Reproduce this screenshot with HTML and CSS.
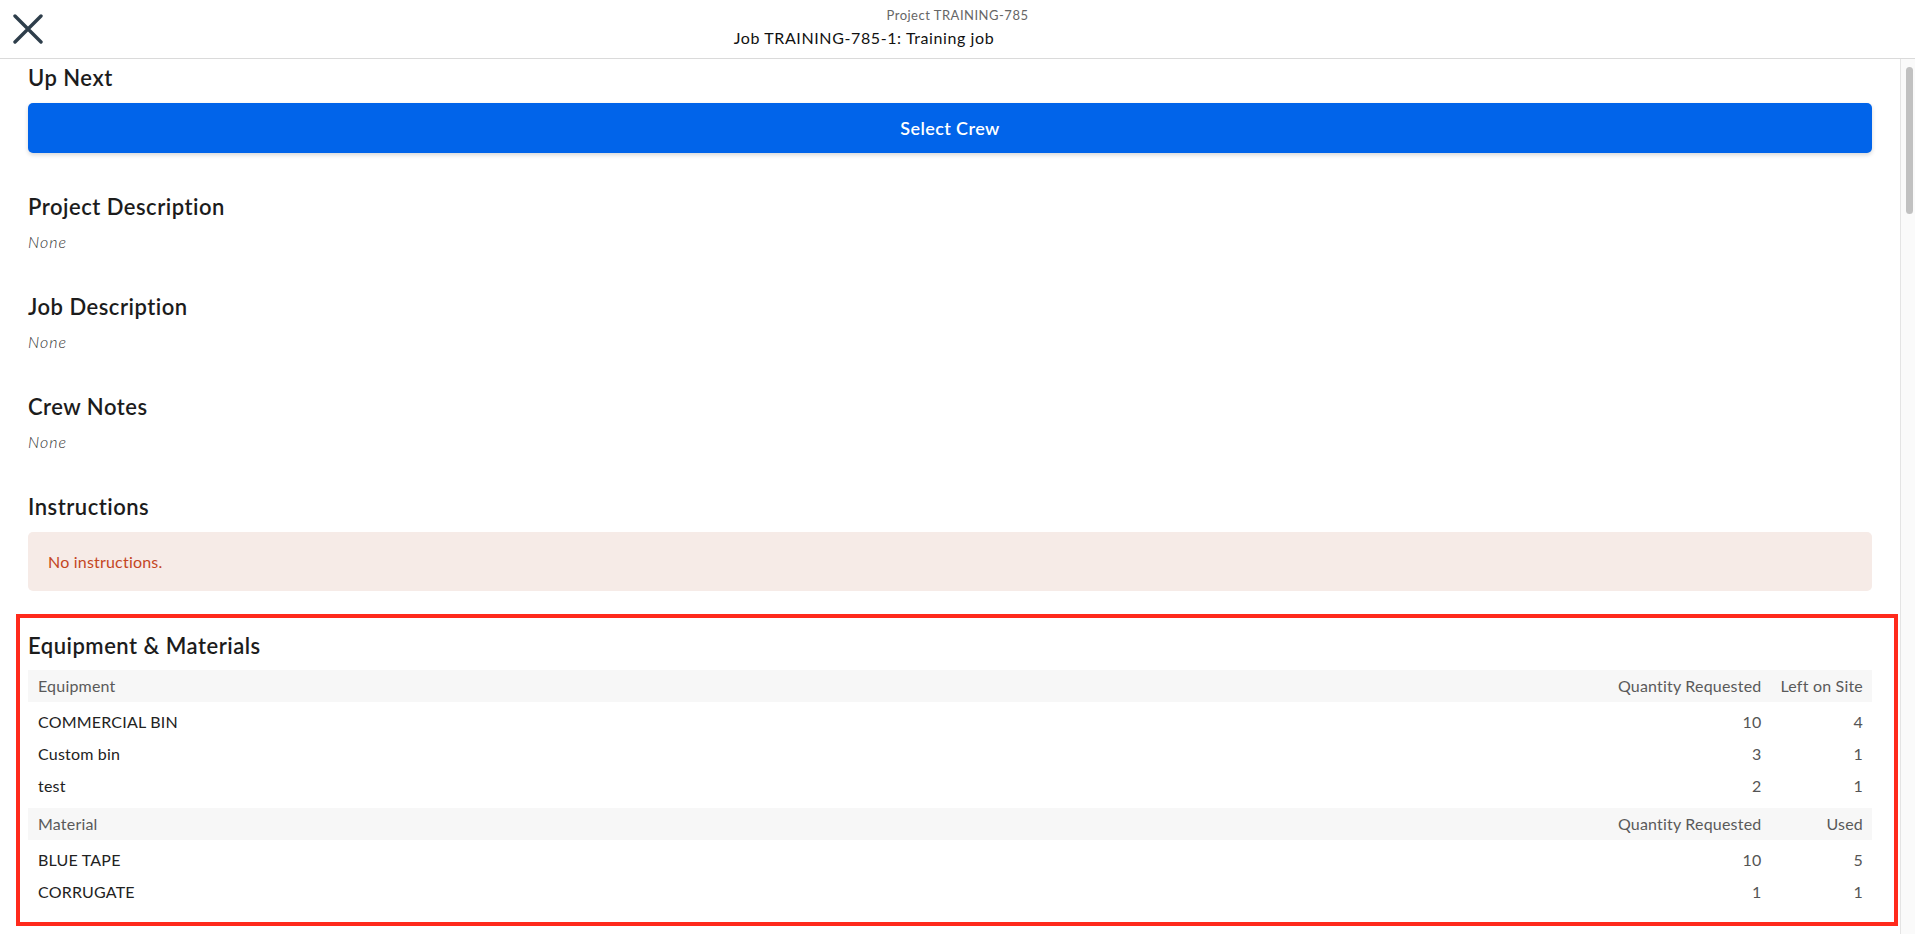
FILE: index.html
```html
<!DOCTYPE html>
<html lang="en">
<head>
    <meta charset="UTF-8">
    <meta name="viewport" content="width=device-width, initial-scale=1.0">
    <title>Job TRAINING-785-1</title>
    <link rel="stylesheet" href="styles.css">
</head>
<body>
    <header class="topbar">
        <button class="close-btn" aria-label="Close">
            <svg width="30" height="30" viewBox="0 0 30 30">
                <path d="M2 2 L28 28 M28 2 L2 28" stroke="#2e3e4b" stroke-width="3.4" stroke-linecap="round" fill="none"/>
            </svg>
        </button>
        <div class="titles">
            <div class="project-name">Project TRAINING-785</div>
            <div class="job-name">Job TRAINING-785-1: Training job</div>
        </div>
    </header>

    <main class="content">
        <div class="inner">
            <section class="block up-next">
                <h2>Up Next</h2>
                <button class="primary-btn">Select Crew</button>
            </section>

            <section class="block">
                <h2>Project Description</h2>
                <div class="empty">None</div>
            </section>

            <section class="block">
                <h2>Job Description</h2>
                <div class="empty">None</div>
            </section>

            <section class="block">
                <h2>Crew Notes</h2>
                <div class="empty">None</div>
            </section>

            <section class="block">
                <h2>Instructions</h2>
                <div class="notice">No instructions.</div>
            </section>

            <section class="block equipment">
                <h2>Equipment &amp; Materials</h2>
                <table class="items">
                    <tr class="group-head">
                        <th class="col-name">Equipment</th>
                        <th class="num">Quantity Requested</th>
                        <th class="num">Left on Site</th>
                    </tr>
                    <tr class="first">
                        <td>COMMERCIAL BIN</td>
                        <td class="num">10</td>
                        <td class="num">4</td>
                    </tr>
                    <tr>
                        <td>Custom bin</td>
                        <td class="num">3</td>
                        <td class="num">1</td>
                    </tr>
                    <tr class="last">
                        <td>test</td>
                        <td class="num">2</td>
                        <td class="num">1</td>
                    </tr>
                    <tr class="group-head">
                        <th class="col-name">Material</th>
                        <th class="num">Quantity Requested</th>
                        <th class="num">Used</th>
                    </tr>
                    <tr class="first">
                        <td>BLUE TAPE</td>
                        <td class="num">10</td>
                        <td class="num">5</td>
                    </tr>
                    <tr class="last">
                        <td>CORRUGATE</td>
                        <td class="num">1</td>
                        <td class="num">1</td>
                    </tr>
                </table>
            </section>
        </div>

        <!-- scrollbar rail -->
        <div class="scroll-rail">
            <div class="scroll-thumb"></div>
        </div>
    </main>
</body>
</html>
```

FILE: styles.css
```css
* {
    box-sizing: border-box;
}

body {
    margin: 0;
    font-family: 'Lato', 'Open Sans', sans-serif;
    color: #1f1f1f;
    background: #fff;
    overflow: hidden;
}

/* top bar */
.topbar {
    height: 59px;
    display: grid;
    grid-template-columns: 1fr auto 1fr;
    align-items: center;
    border-bottom: 1px solid #dadada;
}

.close-btn {
    width: 30px;
    height: 30px;
    margin-left: 13px;
    padding: 0;
    border: none;
    background: none;
    cursor: pointer;
    justify-self: start;
}

.close-btn svg {
    display: block;
}

.titles {
    align-self: start;
    padding-top: 6px;
    text-align: center;
}

.project-name {
    font-size: 13px;
    line-height: 18px;
    letter-spacing: 0.5px;
    color: #666;
    margin-bottom: 3px;
}

.job-name {
    font-size: 16px;
    line-height: 22px;
    letter-spacing: 0.6px;
    color: #111;
    text-align: left;
    padding-right: 187px;
}

/* body area */
.content {
    display: flex;
    height: calc(100vh - 59px);
    overflow: hidden;
}

.inner {
    flex: 1;
    padding: 5px 28px 0;
}

.scroll-rail {
    width: 15px;
    flex-shrink: 0;
    background: #fafafa;
    border-left: 1px solid #e4e4e4;
    padding: 8px 2px 0 5px;
}

.scroll-thumb {
    height: 147px;
    background: #c1c1c1;
    border-radius: 4px;
}

.block {
    margin-bottom: 41px;
}

.up-next {
    margin-bottom: 40px;
}

.block h2 {
    margin: 0 0 11px;
    font-size: 22px;
    line-height: 28px;
    font-weight: 600;
    letter-spacing: 0.5px;
    color: #1c1c1c;
}

.primary-btn {
    display: block;
    width: 100%;
    height: 50px;
    border: none;
    border-radius: 5px;
    background: #0164ea;
    color: #fff;
    font-family: inherit;
    font-size: 18px;
    font-weight: 600;
    letter-spacing: 0.4px;
    box-shadow: 0 2px 4px rgba(0, 0, 0, 0.16);
    cursor: pointer;
}

.empty {
    font-size: 16px;
    line-height: 20px;
    font-style: italic;
    font-weight: 300;
    letter-spacing: 1px;
    color: #333;
}

.notice {
    background: #f6ebe7;
    border-radius: 5px;
    padding: 19px 20px;
    font-size: 16px;
    line-height: 21px;
    letter-spacing: 0.2px;
    color: #c4461f;
}

/* equipment table */
.equipment {
    position: relative;
}

.equipment h2 {
    margin-bottom: 10px;
}

/* red highlight frame drawn over the section */
.equipment::after {
    content: '';
    position: absolute;
    top: -18px;
    left: -12px;
    right: -26px;
    bottom: -12px;
    border: 4px solid #ff2a1c;
    pointer-events: none;
}

.items {
    width: 100%;
    border-collapse: collapse;
    font-size: 16px;
    letter-spacing: 0.2px;
}

.items th,
.items td {
    padding: 0 9px 0 10px;
    line-height: 32px;
    text-align: left;
    white-space: nowrap;
}

.items th {
    font-weight: 400;
    color: #5a5a5a;
    background: #f7f7f7;
}

.items td {
    color: #222;
}

.items .col-name {
    width: 100%;
}

.items .num {
    text-align: right;
}

.items td.num {
    color: #555;
}

.items tr.first td {
    padding-top: 4px;
}

.items tr.last td {
    padding-bottom: 6px;
}
```
